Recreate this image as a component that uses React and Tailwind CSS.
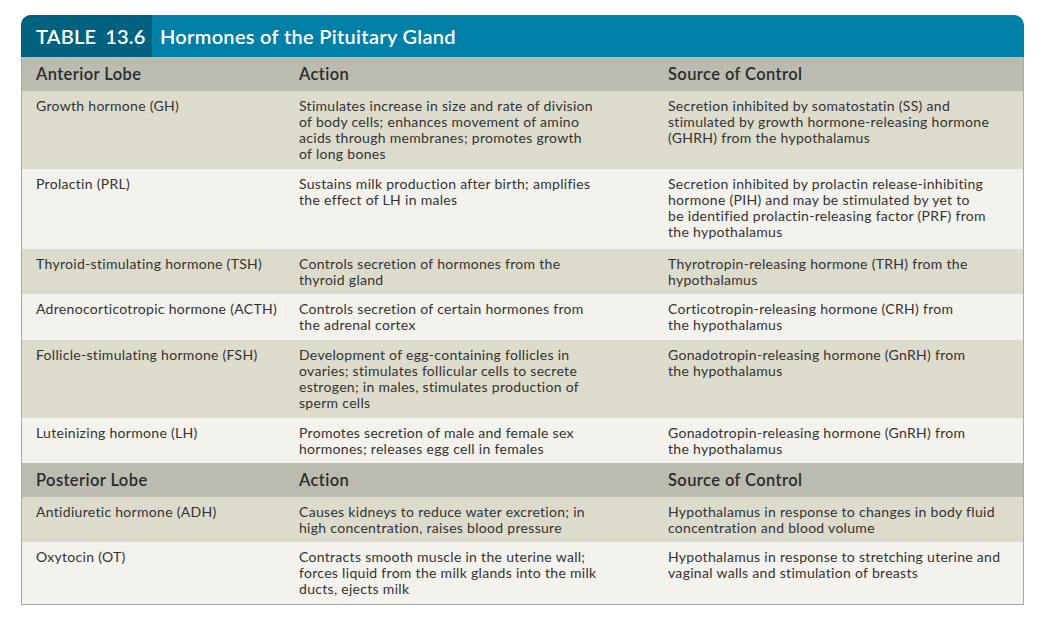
import React from "react";

// cells keep the printed line breaks of the source table
const anterior = [
  {
    name: "Growth hormone (GH)",
    pb: "pb-[7px]",
    action: [
      "Stimulates increase in size and rate of division",
      "of body cells; enhances movement of amino",
      "acids through membranes; promotes growth",
      "of long bones",
    ],
    control: [
      "Secretion inhibited by somatostatin (SS) and",
      "stimulated by growth hormone-releasing hormone",
      "(GHRH) from the hypothalamus",
    ],
  },
  {
    name: "Prolactin (PRL)",
    pb: "pb-[9px]",
    action: ["Sustains milk production after birth; amplifies", "the effect of LH in males"],
    control: [
      "Secretion inhibited by prolactin release-inhibiting",
      "hormone (PIH) and may be stimulated by yet to",
      "be identified prolactin-releasing factor (PRF) from",
      "the hypothalamus",
    ],
  },
  {
    name: "Thyroid-stimulating hormone (TSH)",
    pb: "pb-[6px]",
    action: ["Controls secretion of hormones from the", "thyroid gland"],
    control: ["Thyrotropin-releasing hormone (TRH) from the", "hypothalamus"],
  },
  {
    name: "Adrenocorticotropic hormone (ACTH)",
    pb: "pb-[7px]",
    action: ["Controls secretion of certain hormones from", "the adrenal cortex"],
    control: ["Corticotropin-releasing hormone (CRH) from", "the hypothalamus"],
  },
  {
    name: "Follicle-stimulating hormone (FSH)",
    pb: "pb-[7px]",
    action: [
      "Development of egg-containing follicles in",
      "ovaries; stimulates follicular cells to secrete",
      "estrogen; in males, stimulates production of",
      "sperm cells",
    ],
    control: ["Gonadotropin-releasing hormone (GnRH) from", "the hypothalamus"],
  },
  {
    name: "Luteinizing hormone (LH)",
    pb: "pb-[6px]",
    action: ["Promotes secretion of male and female sex", "hormones; releases egg cell in females"],
    control: ["Gonadotropin-releasing hormone (GnRH) from", "the hypothalamus"],
  },
];

const posterior = [
  {
    name: "Antidiuretic hormone (ADH)",
    pb: "pb-[6px]",
    action: ["Causes kidneys to reduce water excretion; in", "high concentration, raises blood pressure"],
    control: ["Hypothalamus in response to changes in body fluid", "concentration and blood volume"],
  },
  {
    name: "Oxytocin (OT)",
    pb: "pb-[7px]",
    action: [
      "Contracts smooth muscle in the uterine wall;",
      "forces liquid from the milk glands into the milk",
      "ducts, ejects milk",
    ],
    control: [
      "Hypothalamus in response to stretching uterine and",
      "vaginal walls and stimulation of breasts",
    ],
  },
];

const Lines = ({ lines }) =>
  lines.map((line, i) => (
    <div key={i} className="whitespace-nowrap">
      {line}
    </div>
  ));

const HeadRow = ({ label }) => (
  <div className="grid grid-cols-[262px_369px_1fr] h-[34px] items-center bg-[#bcbbb0] text-[16.5px] font-semibold tracking-[0.4px] text-[#2b2b2b]">
    <div className="pl-[14px]">{label}</div>
    <div className="pl-[15px]">Action</div>
    <div className="pl-[15px]">Source of Control</div>
  </div>
);

const BodyRow = ({ row, index }) => (
  <div
    className={`grid grid-cols-[262px_369px_1fr] pt-[7px] ${row.pb} text-[14px] leading-4 tracking-[0.3px] text-[#333] ${
      index % 2 === 0 ? "bg-[#dcdbcc]" : "bg-[#f4f2ec]"
    }`}
  >
    <div className="pl-[14px] whitespace-nowrap">{row.name}</div>
    <div className="pl-[15px]">
      <Lines lines={row.action} />
    </div>
    <div className="pl-[15px]">
      <Lines lines={row.control} />
    </div>
  </div>
);

export default function App() {
  return (
    <div className="min-h-screen bg-white pt-[15px] pl-[21px] font-['Lato',sans-serif]">
      <div className="w-[1003px]">
        <div className="flex h-[42px] items-center rounded-t-[10px] overflow-hidden bg-[#0080a7] text-white">
          <div className="flex h-full w-[131px] items-center gap-[9px] bg-[#00627f] pl-[15px] text-[20px] font-semibold tracking-[0.2px]">
            <span>TABLE</span>
            <span>13.6</span>
          </div>
          <div className="pl-[8px] text-[20px] font-semibold tracking-[0.3px]">
            Hormones of the Pituitary Gland
          </div>
        </div>
        <div className="border-x border-b border-[#a9a9a6]">
          <HeadRow label="Anterior Lobe" />
          {anterior.map((row, i) => (
            <BodyRow key={row.name} row={row} index={i} />
          ))}
          <HeadRow label="Posterior Lobe" />
          {posterior.map((row, i) => (
            <BodyRow key={row.name} row={row} index={i} />
          ))}
        </div>
      </div>
    </div>
  );
}
